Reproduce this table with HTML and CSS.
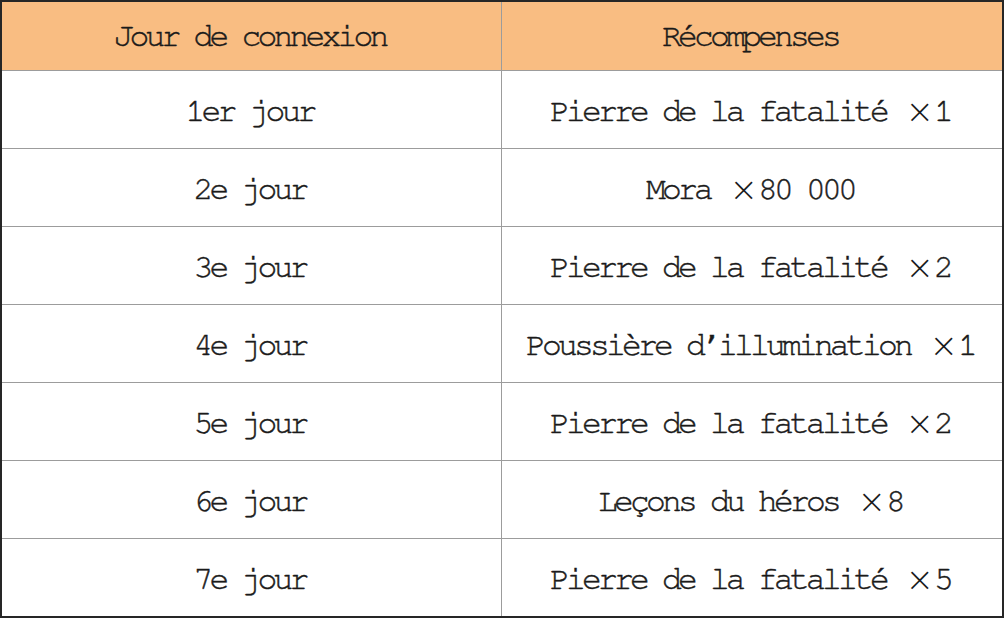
FILE: index.html
```html
<!DOCTYPE html>
<html lang="fr">
<head>
<meta charset="utf-8">
<title>Récompenses de connexion</title>
<link rel="stylesheet" href="styles.css">
</head>
<body>
<div class="table">
  <div class="cell head left">Jour de connexion</div>
  <div class="cell head">Récompenses</div>

  <div class="cell left">1er jour</div>
  <div class="cell">Pierre de la fatalité <span class="mul">×</span>1</div>

  <div class="cell left">2e jour</div>
  <div class="cell">Mora <span class="mul">×</span>80 000</div>

  <div class="cell left">3e jour</div>
  <div class="cell">Pierre de la fatalité <span class="mul">×</span>2</div>

  <div class="cell left">4e jour</div>
  <div class="cell">Poussière d’illumination <span class="mul">×</span>1</div>

  <div class="cell left">5e jour</div>
  <div class="cell">Pierre de la fatalité <span class="mul">×</span>2</div>

  <div class="cell left">6e jour</div>
  <div class="cell">Leçons du héros <span class="mul">×</span>8</div>

  <div class="cell left last">7e jour</div>
  <div class="cell last">Pierre de la fatalité <span class="mul">×</span>5</div>
</div>
</body>
</html>
```
FILE: styles.css
```css
html, body {
  margin: 0;
  padding: 0;
  background: #ffffff;
}

.table {
  box-sizing: border-box;
  width: 1004px;
  height: 618px;
  border: 2px solid #262626;
  display: grid;
  grid-template-columns: 500px 500px;
  grid-template-rows: 69px repeat(6, 78px) 77px;
  font-family: "FreeMono", "Liberation Mono", monospace;
  font-size: 33px;
  letter-spacing: -3.8px;
  color: #1a1a1a;
  -webkit-text-stroke: 0.45px #1a1a1a;
}

.cell {
  box-sizing: border-box;
  display: flex;
  align-items: center;
  justify-content: center;
  border-bottom: 1px solid #9c9c9c;
  white-space: pre;
  padding-right: 4px;
  padding-top: 3px;
}

.cell.left {
  border-right: 1px solid #9c9c9c;
}

.cell.last {
  border-bottom: none;
}

.cell.head {
  background: #f9bd82;
  padding-top: 0;
}

.mul {
  display: inline-block;
  width: 32px;
  text-align: right;
  letter-spacing: 0;
  font-family: "DejaVu Sans", sans-serif;
  font-weight: 200;
  font-size: 34px;
  line-height: 1;
  -webkit-text-stroke: 0;
}
```
